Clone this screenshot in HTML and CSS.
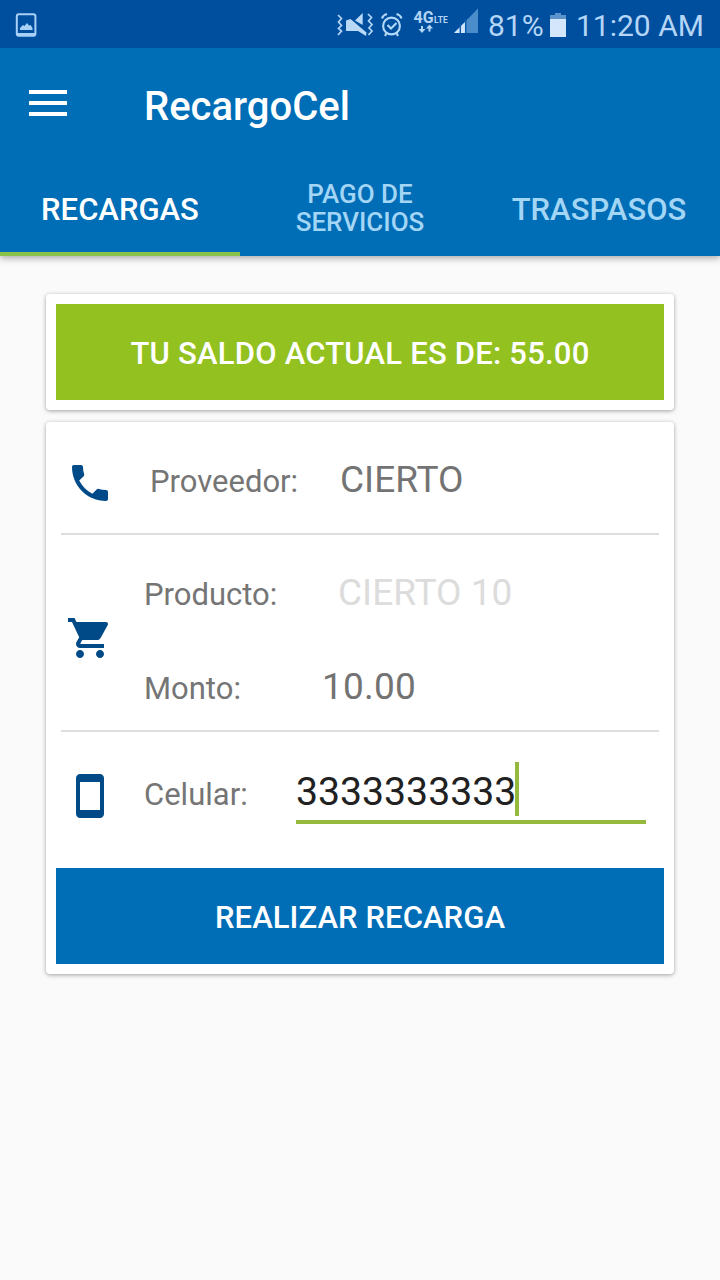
FILE: index.html
```html
<!DOCTYPE html>
<html lang="es">
<head>
<meta charset="utf-8">
<title>RecargoCel</title>
<link rel="stylesheet" href="styles.css">
</head>
<body>
<header class="header">
  <div class="status">
    <svg class="status-picture" width="22" height="24" viewBox="0 0 22 24"><rect x="1.800" y="1.200" width="18.600" height="21.600" rx="2" fill="none" stroke="#a9d0f7" stroke-width="2"/><path d="M2 20h18v3H2z" fill="#a9d0f7"/><path d="M5 17v-2l3-3 1.500 1 2.500-3 2 2.500 1.500-.5 2 3v2z" fill="#a9d0f7"/></svg>
    <svg class="status-signals" width="144" height="40" viewBox="0 0 144 40">
      <g fill="none" stroke="#b3d5f5" stroke-width="1.700"><path d="M2 15l3.500 3.500L2.500 22l3 3.500-3 3 3 2.500-3.500 4"/><path d="M32 14l3.500 3.500-3 3.500 3.500 3.500-3 3.500 3 3-3.500 4"/></g>
      <path d="M10 20.500l4.500-1.500 16 13.500-.5 3.500-8-5h-12zM19 20.500L26.700 13v12z" fill="#b9d9f7"/>
      <g fill="none" stroke="#b3d9f8" stroke-width="2.100"><circle cx="55.500" cy="26" r="8.400"/><path d="M51.500 25l3.500 3.500 5.500-5.500M46 18.500q1-3.500 5-4.500M60.500 14q4 1 5 4.500M50.500 33l-1.500 3M60.500 33l1.500 3"/></g>
      <text class="net-big" x="77.500" y="22.500">4G</text><text class="net-small" x="98" y="22.500">LTE</text>
      <path d="M85 26v3h-2.500l3.500 4 3.500-4H87v-3zM92.500 31.500V28.500h-2.500l3.500-4 3.500 4H94.500v3z" fill="#b3d5f5"/>
      <path d="M118 33L142 8.500v24.500z" fill="#4b8dcb"/><path d="M118 33L129 22v11z" fill="#d2e6fb"/><path d="M124.300 24v9M129.700 19v14" stroke="#0d5cad" stroke-width="1.500"/>
    </svg>
    <span class="battery-percent">81%</span>
    <svg class="battery" width="16" height="24" viewBox="0 0 16 24"><path d="M5 0h6v2h5v5H0V2h5z" fill="#5b93cb"/><path d="M0 6h16v18H0z" fill="#d4e6fb"/></svg>
    <span class="clock">11:20 AM</span>
  </div>
  <div class="toolbar">
    <svg class="menu" width="38" height="26" viewBox="0 0 38 26"><path d="M0 2h38M0 13h38M0 24h38" stroke="#fff" stroke-width="4"/></svg>
    <h1 class="title">RecargoCel</h1>
  </div>
  <nav class="tabs">
    <div class="tab tab-active"><span class="tab-label">RECARGAS</span></div>
    <div class="tab tab-two-line"><span class="tab-label">PAGO DE<br>SERVICIOS</span></div>
    <div class="tab tab-transfer"><span class="tab-label">TRASPASOS</span></div>
  </nav>
</header>
<main class="content">
  <section class="card"><div class="banner balance"><span>TU SALDO ACTUAL ES DE: 55.00</span></div></section>
  <section class="card">
    <div class="row row-provider">
      <svg class="icon" viewBox="0 0 24 24"><path d="M6.620 10.790c1.440 2.830 3.760 5.140 6.590 6.590l2.200-2.200c.27-.27.67-.36 1.020-.24 1.120.37 2.330.57 3.570.57.55 0 1 .45 1 1V20c0 .55-.45 1-1 1-9.390 0-17-7.610-17-17 0-.55.45-1 1-1h3.500c.55 0 1 .45 1 1 0 1.250.2 2.450.57 3.570.11.35.03.74-.25 1.020z"/></svg>
      <span class="label provider-label">Proveedor:</span><span class="value">CIERTO</span>
    </div>
    <div class="row row-product">
      <svg class="icon" viewBox="0 0 24 24"><path d="M7 18c-1.100 0-1.990.9-1.990 2S5.900 22 7 22s2-.9 2-2-.9-2-2-2zM1 2v2h2l3.600 7.590-1.350 2.450c-.16.28-.25.61-.25.96 0 1.100.9 2 2 2h12v-2H7.420c-.14 0-.25-.11-.25-.25l.03-.12.900-1.630h7.450c.75 0 1.410-.41 1.750-1.030l3.580-6.490c.08-.14.120-.31.120-.48 0-.55-.45-1-1-1H5.210l-.94-2H1zm16 16c-1.100 0-1.990.9-1.990 2s.89 2 1.990 2 2-.9 2-2-.9-2-2-2z"/></svg>
      <div class="lines">
        <div class="line"><span class="label product-label">Producto:</span><span class="value value-disabled">CIERTO 10</span></div>
        <div class="line"><span class="label amount-label">Monto:</span><span class="value amount">10.00</span></div>
      </div>
    </div>
    <div class="row row-phone">
      <svg class="icon" viewBox="0 0 24 24"><path d="M17 1.010L7 1c-1.100 0-1.990.9-1.990 2v18c0 1.100.89 2 1.990 2h10c1.100 0 2-.9 2-2V3c0-1.100-.9-1.990-2-1.990zM17 19H7V5h10v14z"/></svg>
      <span class="label phone-label">Celular:</span>
      <div class="field"><span class="number">3333333333</span><span class="caret"></span></div>
    </div>
    <div class="banner submit"><span>REALIZAR RECARGA</span></div>
  </section>
</main>
</body>
</html>
```
FILE: styles.css
```css
* { box-sizing: border-box; }
body { margin: 0; width: 720px; height: 1280px; overflow: hidden; background: #fafafa; font-family: Roboto, sans-serif; }
span, h1 { white-space: nowrap; }
svg { display: block; flex: none; }
.header { height: 256px; background: #006db7; box-shadow: 0 2px 7px rgba(0,0,0,.35); }
.status { height: 48px; display: flex; background: #004f9f; color: #b5d6f6; font-size: 30px; line-height: 52px; }
.status-picture { margin: 13px 0 0 15px; }
.status-signals { margin-left: 299px; }
.net-big { font-size: 16px; font-weight: 700; fill: #b3d5f5; }
.net-small { font-size: 8.500px; font-weight: 700; fill: #b3d5f5; }
.battery-percent { width: 63px; padding-left: 8px; }
.battery { margin: 13px 0 0 7px; }
.clock { margin-left: 10px; }
.toolbar { height: 112px; display: flex; }
.menu { margin: 42px 0 0 29px; }
.title { margin: 0 0 0 77px; color: #fff; font-size: 40px; font-weight: 500; line-height: 118px; height: 112px; }
.tabs { height: 96px; display: grid; grid-template-columns: repeat(3, 1fr); }
.tab { display: flex; justify-content: center; align-items: center; color: #a3d5f5; font-size: 31px; font-weight: 500; border-bottom: 4px solid transparent; padding-top: 6px; text-align: center; }
.tab-active { color: #fff; border-color: #8bc34a; }
.tab-two-line { font-size: 26px; line-height: 28px; padding-top: 4px; }
.tab-transfer { padding-right: 2px; }
.content { padding: 38px 46px; display: flex; flex-direction: column; gap: 12px; }
.card { padding: 10px; background: #fff; border-radius: 4px; box-shadow: 0 1px 4px rgba(0,0,0,.36); }
.banner { height: 96px; display: flex; align-items: center; justify-content: center; padding-top: 2px; color: #fff; font-size: 31px; font-weight: 500; }
.balance { background: #93c120; letter-spacing: .22px; }
.submit { background: #006db7; letter-spacing: .08px; }
.row { display: flex; margin: 0 5px; padding-left: 5px; }
.row-provider { height: 103px; border-bottom: 2px solid #dedede; }
.row-product { height: 197px; border-bottom: 2px solid #dedede; }
.row-phone { height: 136px; }
.icon { width: 48px; height: 48px; fill: #004b87; margin-top: 27px; }
.row-product .icon { margin-top: 79px; }
.row-phone .icon { margin-top: 40px; }
.label { color: #757575; font-size: 31px; line-height: 40px; }
.value { color: #737373; font-size: 37px; line-height: 42px; }
.value-disabled { color: #dcdcdc; }
.amount { letter-spacing: .2px; }
.provider-label { margin: 30px 0 0 36px; width: 190px; }
.row-provider .value { margin-top: 27px; }
.lines { margin: 37px 0 0 30px; display: flex; flex-direction: column; gap: 51px; }
.line { display: flex; height: 43px; }
.line .label { padding-top: 3px; }
.product-label { width: 194px; }
.amount-label { width: 178px; }
.phone-label { margin: 43px 0 0 30px; width: 152px; }
.field { width: 350px; height: 62px; margin-top: 30px; display: flex; border-bottom: 4px solid #94b93c; }
.number { width: 219px; color: #212121; font-size: 39.200px; line-height: 60px; height: 58px; }
.caret { width: 4px; height: 54px; background: #94b93c; }
```
